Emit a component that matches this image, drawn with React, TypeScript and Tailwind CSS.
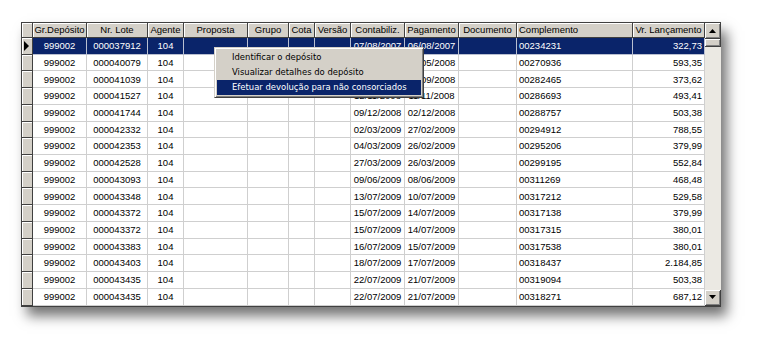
import React from "react";

const cols = [
  { key: "gr", title: "Gr.Depósito", w: 54, align: "center" },
  { key: "nr", title: "Nr. Lote", w: 61, align: "center" },
  { key: "ag", title: "Agente", w: 36, align: "center" },
  { key: "prop", title: "Proposta", w: 64, align: "center" },
  { key: "grupo", title: "Grupo", w: 41, align: "center" },
  { key: "cota", title: "Cota", w: 26, align: "center" },
  { key: "ver", title: "Versão", w: 36, align: "center" },
  { key: "cont", title: "Contabiliz.", w: 54, align: "center" },
  { key: "pag", title: "Pagamento", w: 54, align: "center" },
  { key: "doc", title: "Documento", w: 58, align: "center" },
  { key: "comp", title: "Complemento", w: 116, align: "left" },
  { key: "vr", title: "Vr. Lançamento", w: 72, align: "right" },
] as const;

type Row = string[];

const rows: Row[] = [
  ["999002", "000037912", "104", "", "", "", "", "07/08/2007", "06/08/2007", "", "00234231", "322,73"],
  ["999002", "000040079", "104", "", "", "", "", "14/05/2008", "13/05/2008", "", "00270936", "593,35"],
  ["999002", "000041039", "104", "", "", "", "", "11/09/2008", "10/09/2008", "", "00282465", "373,62"],
  ["999002", "000041527", "104", "", "", "", "", "12/11/2008", "11/11/2008", "", "00286693", "493,41"],
  ["999002", "000041744", "104", "", "", "", "", "09/12/2008", "02/12/2008", "", "00288757", "503,38"],
  ["999002", "000042332", "104", "", "", "", "", "02/03/2009", "27/02/2009", "", "00294912", "788,55"],
  ["999002", "000042353", "104", "", "", "", "", "04/03/2009", "26/02/2009", "", "00295206", "379,99"],
  ["999002", "000042528", "104", "", "", "", "", "27/03/2009", "26/03/2009", "", "00299195", "552,84"],
  ["999002", "000043093", "104", "", "", "", "", "09/06/2009", "08/06/2009", "", "00311269", "468,48"],
  ["999002", "000043348", "104", "", "", "", "", "13/07/2009", "10/07/2009", "", "00317212", "529,58"],
  ["999002", "000043372", "104", "", "", "", "", "15/07/2009", "14/07/2009", "", "00317138", "379,99"],
  ["999002", "000043372", "104", "", "", "", "", "15/07/2009", "14/07/2009", "", "00317315", "380,01"],
  ["999002", "000043383", "104", "", "", "", "", "16/07/2009", "15/07/2009", "", "00317538", "380,01"],
  ["999002", "000043403", "104", "", "", "", "", "18/07/2009", "17/07/2009", "", "00318437", "2.184,85"],
  ["999002", "000043435", "104", "", "", "", "", "22/07/2009", "21/07/2009", "", "00319094", "503,38"],
  ["999002", "000043435", "104", "", "", "", "", "22/07/2009", "21/07/2009", "", "00318271", "687,12"],
];

function alignCls(a: string) {
  if (a === "left") return "justify-start pl-[2px]";
  if (a === "right") return "justify-end pr-[2px]";
  return "justify-center";
}

export default function App() {
  return (
    <div
      className="relative w-[766px] h-[350px] bg-white overflow-hidden pl-[21px] pt-[22px]"
      style={{ fontFamily: '"Liberation Sans", Arial, sans-serif' }}
    >
      <div className="flex w-[700px] border border-[#404040] bg-white shadow-[6px_9px_12px_rgba(0,0,0,0.55)] text-[9.5px] text-black">
        {/* table */}
        <div className="flex flex-col">
          {/* header */}
          <div className="flex h-[15px]">
            <div className="w-[11px] shrink-0 bg-[#d4d0c8] border-r border-b border-[#404040] shadow-[inset_1px_1px_0_#ffffff]" />
            {cols.map((c) => (
              <div
                key={c.key}
                style={{ width: c.w }}
                className={`shrink-0 flex items-center whitespace-nowrap overflow-hidden bg-[#d4d0c8] border-r border-b border-[#404040] shadow-[inset_1px_1px_0_#ffffff] leading-none ${
                  c.key === "comp" ? "justify-start pl-[2px]" : "justify-center"
                }`}
              >
                {c.title}
              </div>
            ))}
          </div>
          {/* rows */}
          {rows.map((r, i) => {
            const sel = i === 0;
            return (
              <div key={i} className="flex h-[16.73px]">
                <div className="w-[11px] shrink-0 bg-[#d4d0c8] border-r border-b border-[#404040] shadow-[inset_1px_1px_0_#ffffff] flex items-center pl-[1px]">
                  {sel && (
                    <svg width="7" height="10" viewBox="0 0 7 10">
                      <path d="M1 0 L6 5 L1 10 Z" fill="#000" />
                    </svg>
                  )}
                </div>
                {cols.map((c, j) => (
                  <div
                    key={c.key}
                    style={{ width: c.w }}
                    className={`shrink-0 flex items-center whitespace-nowrap overflow-hidden border-r border-b leading-none ${alignCls(
                      c.align
                    )} ${
                      sel
                        ? "bg-[#0a246a] text-white border-[#b9bfd0]"
                        : "bg-white border-[#cfcfcf]"
                    }`}
                  >
                    {r[j]}
                  </div>
                ))}
              </div>
            );
          })}
        </div>
        {/* scrollbar */}
        <div className="w-[16px] shrink-0 flex flex-col bg-[#ebe9e3]">
          <div className="h-[16px] shrink-0 bg-[#d4d0c8] border-r border-b border-[#404040] shadow-[inset_1px_1px_0_#ffffff,inset_-1px_-1px_0_#808080] flex items-center justify-center">
            <svg width="7" height="4" viewBox="0 0 7 4">
              <path d="M3.5 0 L7 4 L0 4 Z" fill="#000" />
            </svg>
          </div>
          <div className="h-[8px] shrink-0 bg-[#d4d0c8] border-r border-b border-[#404040] shadow-[inset_1px_1px_0_#ffffff,inset_-1px_-1px_0_#808080]" />
          <div className="flex-1" />
          <div className="h-[16px] shrink-0 bg-[#d4d0c8] border-r border-b border-[#404040] shadow-[inset_1px_1px_0_#ffffff,inset_-1px_-1px_0_#808080] flex items-center justify-center">
            <svg width="7" height="4" viewBox="0 0 7 4">
              <path d="M0 0 L7 0 L3.5 4 Z" fill="#000" />
            </svg>
          </div>
        </div>
      </div>

      {/* context menu */}
      <div
        className="absolute left-[214px] top-[47px] w-[210px] bg-[#d4d0c8] border border-t-[#d4d0c8] border-l-[#d4d0c8] border-r-[#404040] border-b-[#404040] shadow-[inset_1px_1px_0_#ffffff,inset_-1px_-1px_0_#808080] p-[2px] text-[9.4px] text-black"
        style={{ fontFamily: '"DejaVu Sans Condensed", "Liberation Sans", sans-serif' }}
      >
        <div className="h-[15px] flex items-center pl-[15px] whitespace-nowrap">Identificar o depósito</div>
        <div className="h-[15px] flex items-center pl-[15px] whitespace-nowrap">Visualizar detalhes do depósito</div>
        <div className="h-[15px] flex items-center pl-[15px] whitespace-nowrap bg-[#0a246a] text-white">
          Efetuar devolução para não consorciados
        </div>
      </div>
    </div>
  );
}
